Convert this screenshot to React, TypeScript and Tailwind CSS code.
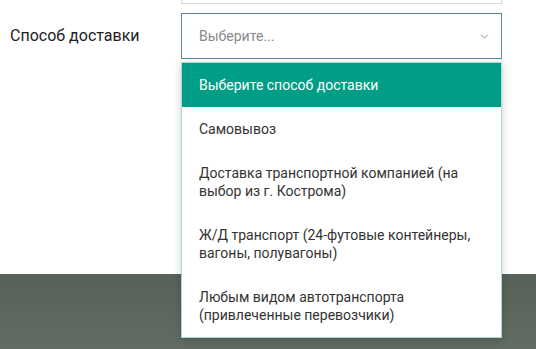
import { ChevronDown } from 'lucide-react';

const options = [
  'Самовывоз',
  'Доставка транспортной компанией (на выбор из г. Кострома)',
  'Ж/Д транспорт (24-футовые контейнеры, вагоны, полувагоны)',
  'Любым видом автотранспорта (привлеченные перевозчики)',
];

export default function App() {
  return (
    <div className="relative flex h-[349px] w-[536px] flex-col overflow-hidden bg-white font-['Roboto',sans-serif]">
      <div className="flex h-[274px] shrink-0 flex-col bg-white">
        {/* previous field, cut off at the top */}
        <div className="ml-[181px] mt-[-37px] h-[41px] w-[321px] shrink-0 border border-[#d6d6d6]" />

        <div className="mt-[9px] flex items-center">
          <label className="w-[181px] pl-[10px] text-[16px] text-[#222]">Способ доставки</label>
          <div className="flex h-[46px] w-[321px] items-center justify-between border border-[#5d8795] pl-[17px] pr-[10px] text-[14px] text-[#8a8a8a]">
            <span>Выберите...</span>
            <ChevronDown size={13} strokeWidth={1.6} className="text-[#888]" />
          </div>
        </div>
      </div>
      <div className="flex-1 bg-gradient-to-b from-[#566259] to-[#616d62]" />

      {/* open dropdown */}
      <div className="absolute left-[181px] top-[62px] w-[321px] border border-[#a7dbd3] bg-white shadow-[0_2px_8px_rgba(0,0,0,0.2)]">
        <div className="bg-[#009e87] px-[17px] py-[13px] text-[14px] leading-[18px] text-white">
          Выберите способ доставки
        </div>
        {options.map((o) => (
          <div key={o} className="px-[17px] py-[13px] pr-[24px] text-[14px] leading-[18px] text-[#333]">
            {o}
          </div>
        ))}
      </div>
    </div>
  );
}
